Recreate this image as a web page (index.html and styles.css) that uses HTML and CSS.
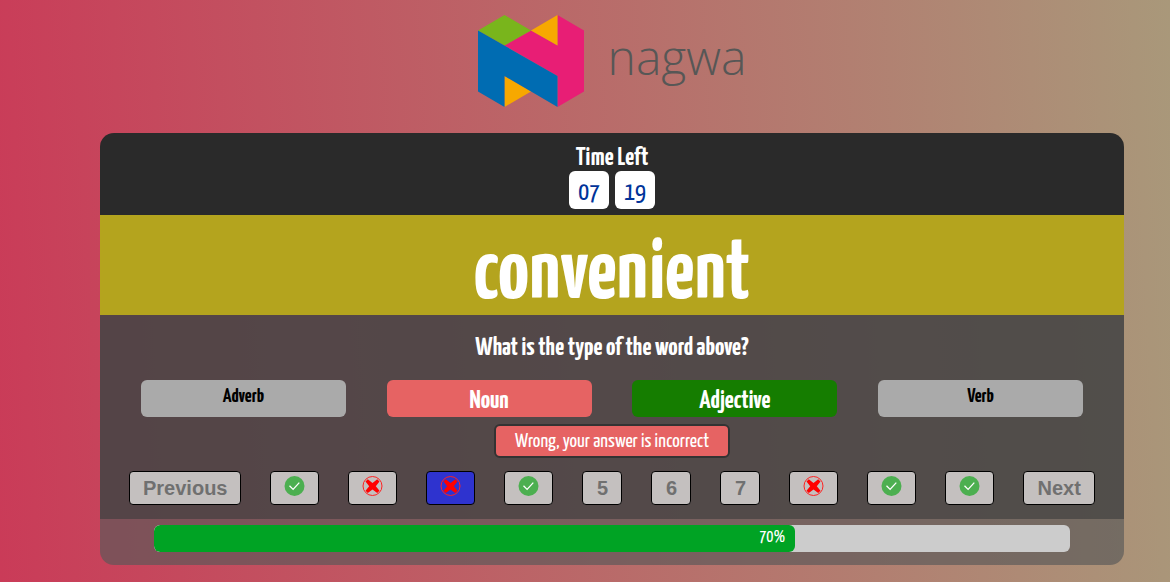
FILE: index.html
```html
<!DOCTYPE html>
<html lang="en">
<head>
<meta charset="utf-8">
<title>Nagwa Quiz</title>
<link rel="stylesheet" href="styles.css">
</head>
<body>
<svg width="0" height="0" class="sprite" aria-hidden="true">
  <symbol id="check" viewBox="0 0 20 20">
    <circle cx="10" cy="10" r="10" fill="#4caf50"/>
    <path d="M5 9.800 8.600 13.400 14.800 6.600" fill="none" stroke="#fff" stroke-width="1.3"/>
  </symbol>
  <symbol id="cross" viewBox="0 0 20 20">
    <circle cx="10" cy="10" r="9.500" fill="none" stroke="#f22" stroke-width="1"/>
    <path d="M5.300 3.300 10 7 14.700 3.300 17 5.500 13.300 10.200 17 14.800 14.700 17 10 13.400 5.300 17 3 14.800 6.700 10.200 3 5.500Z" fill="#f00"/>
  </symbol>
</svg>
<header class="brand">
  <svg class="mark" viewBox="0 0 106 92" role="img" aria-label="Nagwa logo">
    <path fill="#e81e75" d="M26.500 30.500 53 15.500 79.500 30.500V0L106 15.500V76.500L79.500 92V61Z"/>
    <path fill="#79b51c" d="M0 15.500 26.500 0 53 15.500 26.500 30.500Z"/>
    <path fill="#f7a800" d="M53 15.500 79.500 0V30.500ZM26.500 61 53 76.500 26.500 92Z"/>
    <path fill="#006cb2" d="M0 15.500 79.500 61V92L26.500 61V92L0 76.500Z"/>
  </svg>
  <span class="brand-name">nagwa</span>
</header>
<main class="quiz">
  <section class="timer">
    <h2 class="timer-title">Time Left</h2>
    <div class="clock"><span class="digits">07</span><span class="digits">19</span></div>
  </section>
  <h1 class="word">convenient</h1>
  <section class="body">
    <h2 class="question">What is the type of the word above?</h2>
    <div class="options">
      <button class="option" type="button">Adverb</button>
      <button class="option wrong" type="button">Noun</button>
      <button class="option right" type="button">Adjective</button>
      <button class="option" type="button">Verb</button>
    </div>
    <p class="message">Wrong, your answer is incorrect</p>
    <nav class="pager">
      <button class="step" type="button">Previous</button>
      <button class="step" type="button" aria-label="Question 1"><svg class="icon"><use href="#check"/></svg></button>
      <button class="step" type="button" aria-label="Question 2"><svg class="icon"><use href="#cross"/></svg></button>
      <button class="step current" type="button" aria-label="Question 3"><svg class="icon"><use href="#cross"/></svg></button>
      <button class="step" type="button" aria-label="Question 4"><svg class="icon"><use href="#check"/></svg></button>
      <button class="step number" type="button">5</button>
      <button class="step number" type="button">6</button>
      <button class="step number" type="button">7</button>
      <button class="step" type="button" aria-label="Question 8"><svg class="icon"><use href="#cross"/></svg></button>
      <button class="step" type="button" aria-label="Question 9"><svg class="icon"><use href="#check"/></svg></button>
      <button class="step" type="button" aria-label="Question 10"><svg class="icon"><use href="#check"/></svg></button>
      <button class="step" type="button">Next</button>
    </nav>
  </section>
  <footer class="footer">
    <div class="track"><div class="fill" style="width: 70%">70%</div></div>
  </footer>
</main>
</body>
</html>
```
FILE: styles.css
```css
* { box-sizing: border-box; }
body {
  margin: 0;
  min-height: 100vh;
  padding: 15px 46px 17px 100px;
  background: linear-gradient(87deg, #ca3b58, #a9987a);
  font-family: "Yanone Kaffeesatz", "Roboto Condensed", "Liberation Sans Narrow", "Liberation Sans", sans-serif;
  color: #fff;
}
h1, h2, p { margin: 0; }
button { font-family: inherit; cursor: pointer; }
.sprite { position: absolute; }
.brand {
  display: flex;
  justify-content: center;
  gap: 24px;
  height: 92px;
  margin-bottom: 26px;
}
.mark { width: 106px; height: 92px; }
.brand-name {
  font-family: "Open Sans", sans-serif;
  font-weight: 300;
  font-size: 48px;
  line-height: 84px;
  color: #575756;
}
.quiz { border-radius: 14px; overflow: hidden; }
.timer {
  background: #2a2a2a;
  padding: 12px 0 6px;
  text-align: center;
}
.timer-title { font-size: 26px; line-height: 26px; }
.clock { display: flex; justify-content: center; gap: 6px; }
.digits {
  width: 40px;
  height: 38px;
  border-radius: 6px;
  background: #fff;
  color: #039;
  font-size: 26px;
  line-height: 44px;
}
.word {
  background: #b4a41e;
  font-size: 86px;
  line-height: 100px;
  padding-top: 10px;
  height: 100px;
  text-align: center;
}
.body { background: rgba(68, 68, 68, .88); padding: 18px 0 14px; }
.question { font-size: 26px; line-height: 30px; text-align: center; }
.options { display: flex; justify-content: space-evenly; margin-top: 17px; }
.option {
  width: 20%;
  height: 37px;
  border: 0;
  border-radius: 6px;
  padding: 0 0 3px;
  background: #aaa;
  color: #000;
  font-size: 20px;
  font-weight: 700;
}
.wrong, .right { padding: 6px 0 0; font-size: 26px; color: #fff; }
.wrong { background: #e66363; }
.right { background: #157d00; }
.message {
  width: fit-content;
  margin: 7px auto 13px;
  padding: 2px 19px 0;
  border: 2px solid #333;
  border-radius: 6px;
  background: #e66363;
  font-size: 20px;
  line-height: 28px;
}
.pager { display: flex; justify-content: space-evenly; }
.step {
  display: flex;
  align-items: center;
  justify-content: center;
  height: 34px;
  padding: 0 13px;
  border: 1px solid #000;
  border-radius: 4px;
  background: #c4c0bf;
  color: #707070;
  font: bold 20px "Liberation Sans", sans-serif;
}
.number { width: 40px; }
.current { background: #2e33cf; }
.icon { display: block; width: 21px; height: 20px; margin-bottom: 4px; }
.footer { background: rgba(88, 88, 88, .66); padding: 6px 54px 13px; }
.track { height: 27px; border-radius: 6px; background: #ccc; overflow: hidden; }
.fill {
  height: 100%;
  padding-right: 10px;
  border-radius: 6px;
  background: #00a324;
  font-size: 17px;
  line-height: 25px;
  text-align: right;
}
```
